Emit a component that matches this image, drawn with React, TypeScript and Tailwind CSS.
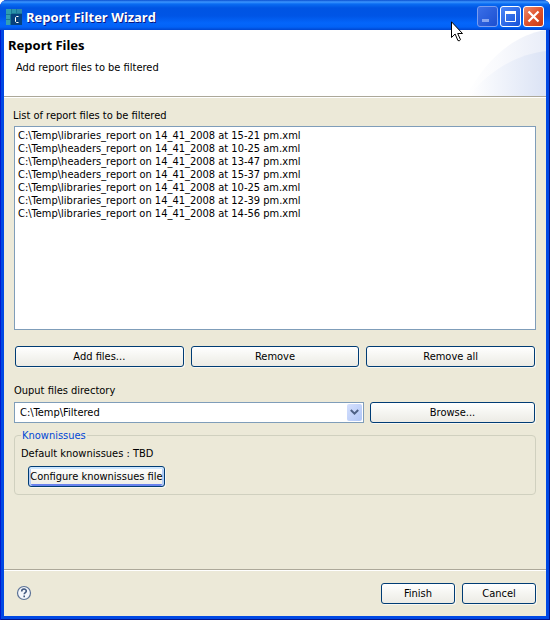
import type { ButtonHTMLAttributes } from "react";
import { useState } from "react";

const initialFiles = [
  "C:\\Temp\\libraries_report on 14_41_2008 at 15-21 pm.xml",
  "C:\\Temp\\headers_report on 14_41_2008 at 10-25 am.xml",
  "C:\\Temp\\headers_report on 14_41_2008 at 13-47 pm.xml",
  "C:\\Temp\\headers_report on 14_41_2008 at 15-37 pm.xml",
  "C:\\Temp\\libraries_report on 14_41_2008 at 10-25 am.xml",
  "C:\\Temp\\libraries_report on 14_41_2008 at 12-39 pm.xml",
  "C:\\Temp\\libraries_report on 14_41_2008 at 14-56 pm.xml",
];

type PushButtonProps = ButtonHTMLAttributes<HTMLButtonElement> & { focused?: boolean };

function PushButton({ className = "", focused = false, ...props }: PushButtonProps) {
  const ring = focused
    ? "shadow-[inset_0_2px_0_#cee7ff,inset_2px_0_0_#b5cdf5,inset_-2px_0_0_#b5cdf5,inset_0_-2px_0_#6982ee,1px_1px_0_#f8f7f1]"
    : "shadow-[1px_1px_0_#f8f7f1]";
  return (
    <button
      type="button"
      className={`h-[21px] rounded-[3px] border border-[#003c74] bg-linear-to-b from-white via-[#f5f5f1] to-[#ecebe5] text-center whitespace-nowrap ${ring} ${className}`}
      {...props}
    />
  );
}

function AppIcon() {
  return (
    <svg width="16" height="16" viewBox="0 0 16 16" aria-hidden="true">
      <rect width="16" height="16" fill="#1a7795" />
      <rect width="5" height="5" fill="#2f9db0" />
      <rect x="6" width="4" height="4" fill="#2b93ab" />
      <rect x="11" width="5" height="4" fill="#2f8aa8" />
      <rect y="6" width="4" height="4" fill="#349fb2" />
      <rect y="11" width="4" height="5" fill="#349fb2" />
      <rect x="5" y="5" width="11" height="11" fill="#06417c" />
      <path d="M12.5 7.5h-2l-1 1v4l1 1h2" fill="none" stroke="#fff" />
    </svg>
  );
}

function TitleBar() {
  const control = "flex size-[21px] items-center justify-center rounded-[3px] border";
  return (
    <div className="flex h-[30px] items-center gap-1 rounded-t-[7px] bg-[linear-gradient(to_bottom,#0a4fd0_0px,#3c96ff_2px,#0a6cf2_4px,#0054e3_8px,#0055e6_16px,#0466fb_23px,#0262f6_27px,#0046d0_30px)] pt-[3px] pr-[6px] pl-[6px]">
      <AppIcon />
      <h1 className="grow font-['Open_Sans',sans-serif] text-[13px] leading-4 font-bold text-white [text-shadow:1px_1px_0_#0a1883]">
        Report Filter Wizard
      </h1>
      <div className="flex gap-[2px]">
        <button type="button" aria-label="Minimize" disabled className={`${control} border-[#7a9df0] bg-linear-to-br from-[#3a6fe8] to-[#1c4fd0]`}>
          <svg width="13" height="13" viewBox="0 0 13 13">
            <rect x="1" y="9" width="7" height="3" fill="#86a5f0" />
          </svg>
        </button>
        <button type="button" aria-label="Maximize" className={`${control} border-white bg-linear-to-br from-[#4d86f7] to-[#1550d8]`}>
          <svg width="13" height="13" viewBox="0 0 13 13" fill="none" stroke="#fff">
            <path d="M1.5 1.5h10v10h-10z" />
            <path d="M1 2.5h11" strokeWidth="3" />
          </svg>
        </button>
        <button type="button" aria-label="Close" className={`${control} border-white bg-linear-to-br from-[#ec8a6c] via-[#e0522c] to-[#c83a12]`}>
          <svg width="13" height="13" viewBox="0 0 13 13">
            <path d="M1.5 1.5l10 10M11.5 1.5l-10 10" stroke="#fff" strokeWidth="2.2" />
          </svg>
        </button>
      </div>
    </div>
  );
}

function HeaderArt() {
  return (
    <svg className="block h-[66px] w-20 shrink-0" viewBox="0 0 80 66" aria-hidden="true">
      <defs>
        <linearGradient id="outer" x1="0" x2="1">
          <stop offset="0" stopColor="#fff" />
          <stop offset="0.4" stopColor="#f9fafd" />
          <stop offset="1" stopColor="#e9edf8" />
        </linearGradient>
        <linearGradient id="inner" x1="0" x2="1">
          <stop offset="0" stopColor="#fff" />
          <stop offset="1" stopColor="#dbe3f5" />
        </linearGradient>
      </defs>
      <path d="M0 66C18 34 43 6 80 0V66Z" fill="url(#outer)" />
      <path d="M3 66C20 44 47 25 80 21V66Z" fill="url(#inner)" />
    </svg>
  );
}

function Cursor() {
  return (
    <svg className="pointer-events-none absolute top-[21px] right-[87px]" width="12" height="21" viewBox="0 0 12 21" aria-hidden="true">
      <path
        d="M.5 .8v15.7l3.6-3.5 2.8 6.5q1.4 1 2.6-.8l-2.8-6.2h4.8z"
        fill="#fff"
        stroke="#000"
      />
    </svg>
  );
}

export default function App() {
  const [files, setFiles] = useState(initialFiles);
  const [selected, setSelected] = useState<string[]>([]);

  return (
    <div className="relative flex min-h-screen flex-col rounded-t-[7px] bg-[#0048e4] font-['DejaVu_Sans_Condensed','DejaVu_Sans',sans-serif] text-[11px] leading-[13px] text-black shadow-[inset_1px_0_0_#0019cf,inset_-1px_-1px_0_#00138c]">
      <TitleBar />
      <div className="mx-1 mb-1 flex grow flex-col bg-[#ece9d8]">
        <header className="flex justify-between border-b border-[#aca899] bg-white shadow-[0_1px_0_#fff]">
          <div className="pt-[7px] pl-1">
            <h2 className="font-['Noto_Sans',sans-serif] text-[13px] leading-4 font-bold">Report Files</h2>
            <p className="mt-2 ml-2">Add report files to be filtered</p>
          </div>
          <HeaderArt />
        </header>

        <main className="flex grow flex-col px-[10px] pt-[12px]">
          <label htmlFor="files" className="-ml-px">List of report files to be filtered</label>
          <select
            id="files"
            multiple
            size={7}
            value={selected}
            onChange={(e) => setSelected(Array.from(e.target.selectedOptions, (o) => o.value))}
            className="mt-1 h-[204px] w-full appearance-none overflow-hidden border border-[#7f9db9] bg-white px-[3px] py-[2px] outline-none"
          >
            {files.map((file) => (
              <option key={file} value={file} className="h-[13px] min-h-0 p-0 leading-[13px]">
                {file}
              </option>
            ))}
          </select>

          <div className="mt-4 grid grid-cols-3 gap-[7px] px-px">
            <PushButton>Add files...</PushButton>
            <PushButton onClick={() => setFiles(files.filter((f) => !selected.includes(f)))}>Remove</PushButton>
            <PushButton onClick={() => setFiles([])}>Remove all</PushButton>
          </div>

          <label htmlFor="directory" className="mt-[17px]">Ouput files directory</label>
          <div className="mt-[5px] flex gap-[6px] pr-px">
            <div className="relative grow">
              <select id="directory" className="h-[21px] w-full appearance-none border border-[#7f9db9] bg-white px-[5px] outline-none">
                <option>C:\Temp\Filtered</option>
              </select>
              <span className="pointer-events-none absolute inset-y-[2px] right-[2px] flex w-[15px] items-center justify-center rounded-[2px] bg-linear-to-br from-[#d5e0fd] to-[#b0c6f6]">
                <svg width="9" height="7" viewBox="0 0 9 7" fill="none" stroke="#4d6185" strokeWidth="2">
                  <path d="M.8 1l3.7 3.7L8.2 1" />
                </svg>
              </span>
            </div>
            <PushButton className="w-[165px] shrink-0">Browse...</PushButton>
          </div>

          <fieldset className="mt-[6px] rounded-[4px] border border-[#d0d0bf] px-[6px] pb-[7px]">
            <legend className="px-px text-[#0046d5]">Knownissues</legend>
            <p className="mt-[5px]">Default knownissues : TBD</p>
            <PushButton focused className="mt-[6px] ml-[7px] w-[137px]">
              <span className="flex justify-center">Configure knownissues file</span>
            </PushButton>
          </fieldset>
        </main>

        <footer className="flex h-[47px] items-center gap-[7px] border-t border-[#aca899] px-[10px] shadow-[inset_0_1px_0_#fff]">
          <button type="button" aria-label="Help" className="mr-auto ml-[2px]">
            <svg width="16" height="16" viewBox="0 0 16 16" fill="none" stroke="#5b7296">
              <circle cx="8" cy="8" r="6.5" fill="#f3f6fb" strokeWidth="1.2" />
              <path d="M5.7 6.4C5.7 3.2 10.3 3.4 10.3 6c0 1.6-2.1 1.6-2.1 3.3M8.2 10.6v1.6" stroke="#41587f" strokeWidth="1.6" />
            </svg>
          </button>
          <PushButton className="w-[74px]">Finish</PushButton>
          <PushButton className="w-[74px]">Cancel</PushButton>
        </footer>
      </div>
      <Cursor />
    </div>
  );
}
